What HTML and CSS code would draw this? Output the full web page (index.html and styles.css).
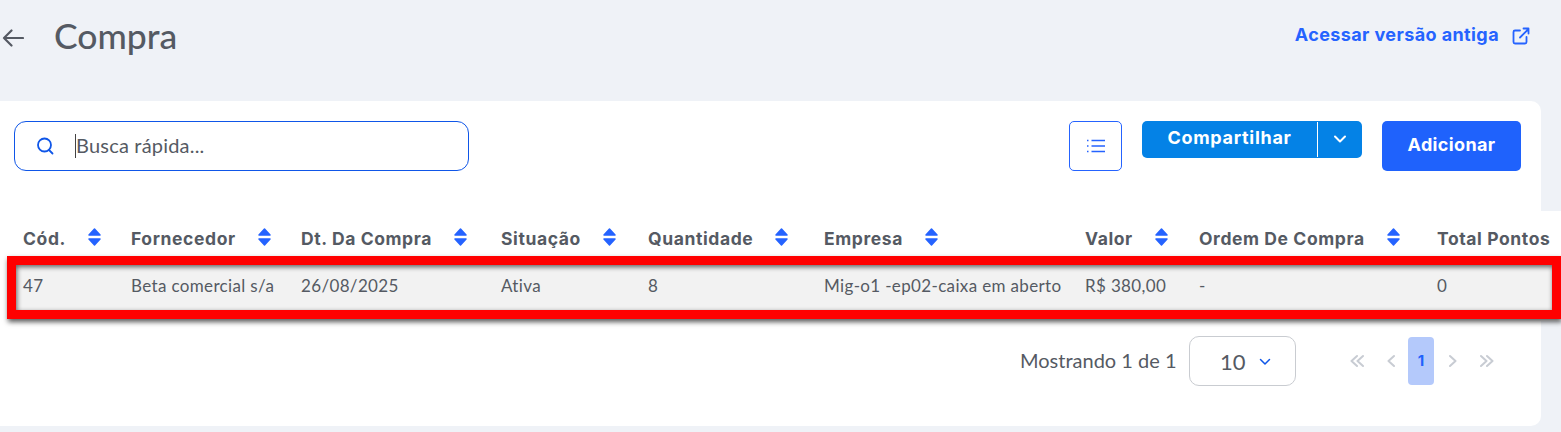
FILE: index.html
```html
<!DOCTYPE html>
<html lang="pt">
<head>
<meta charset="utf-8">
<title>Compra</title>
<link rel="stylesheet" href="styles.css">
</head>
<body>
<svg class="defs" width="0" height="0" aria-hidden="true">
  <symbol id="sort" viewBox="0 0 13 18"><path fill="#2563ff" stroke="#2563ff" stroke-linejoin="round" stroke-width="1.500" d="M6.500 1 12 7H1ZM1 11h11l-5.500 6Z"/></symbol>
  <symbol id="dbl-l" viewBox="0 0 14 14"><path fill="none" stroke="#c8ccd3" stroke-width="2" stroke-linecap="round" stroke-linejoin="round" d="M7 2 1.500 7 7 12M13 2 7.500 7l5.500 5"/></symbol>
  <symbol id="dbl-r" viewBox="0 0 14 14"><path fill="none" stroke="#c8ccd3" stroke-width="2" stroke-linecap="round" stroke-linejoin="round" d="m1 2 5.500 5L1 12M7 2l5.500 5L7 12"/></symbol>
  <symbol id="sgl-l" viewBox="0 0 8 14"><path fill="none" stroke="#c8ccd3" stroke-width="2" stroke-linecap="round" stroke-linejoin="round" d="M7 2 1.500 7 7 12"/></symbol>
  <symbol id="sgl-r" viewBox="0 0 8 14"><path fill="none" stroke="#c8ccd3" stroke-width="2" stroke-linecap="round" stroke-linejoin="round" d="m1 2 5.500 5L1 12"/></symbol>
</svg>
<header class="topbar">
  <div class="title-group">
    <svg class="back" width="22" height="22" viewBox="0 0 22 22" fill="none" stroke="#555a63" stroke-width="2.200" stroke-linecap="round" stroke-linejoin="round"><path d="M2 11h19M9.500 3.500 2 11l7.500 7.500"/></svg>
    <h1>Compra</h1>
  </div>
  <a class="legacy">Acessar versão antiga
    <svg width="18" height="18" viewBox="0 0 18 18" fill="none" stroke="#2563ff" stroke-width="1.800" stroke-linecap="round" stroke-linejoin="round"><path d="M8 3.500H3a1.500 1.500 0 0 0-1.500 1.500v10A1.500 1.500 0 0 0 3 16.500h10a1.500 1.500 0 0 0 1.500-1.500v-5M8 10.500 16.500 2M11.500 1.500h5v5"/></svg>
  </a>
</header>
<main class="card">
  <div class="toolbar">
    <div class="search">
      <svg width="18" height="18" viewBox="0 0 18 18" fill="none" stroke="#0f56e8" stroke-width="1.800" stroke-linecap="round"><circle cx="8.500" cy="8" r="6.500"/><path d="m13 13 3.500 3.500"/></svg>
      <span class="caret"></span><span class="placeholder">Busca rápida...</span>
    </div>
    <div class="actions">
      <button class="list-btn" aria-label="Lista">
        <svg width="18" height="14" viewBox="0 0 18 14" fill="none" stroke="#2563ff" stroke-width="1.300"><path d="M0 1.500h2M0 7h2M0 12.500h2" stroke-dasharray="1.500 0.500"/><path d="M4.500 1.500H18M4.500 7H18M4.500 12.500H18"/></svg>
      </button>
      <div class="split">
        <span class="split-label">Compartilhar</span>
        <span class="split-arrow"><svg width="14" height="9" viewBox="0 0 14 9" fill="none" stroke="#fff" stroke-width="2" stroke-linecap="round" stroke-linejoin="round"><path d="m2 1.500 5 5 5-5"/></svg></span>
      </div>
      <button class="primary">Adicionar</button>
    </div>
  </div>
  <div class="table-wrap">
    <table>
      <colgroup>
        <col class="c1"><col class="c2"><col class="c3"><col class="c4"><col class="c5"><col class="c6"><col class="c7"><col class="c8"><col class="c9">
      </colgroup>
      <thead>
        <tr>
          <th><span class="th"><span class="lbl">Cód.</span><svg class="sort"><use href="#sort"/></svg></span></th>
          <th><span class="th"><span class="lbl">Fornecedor</span><svg class="sort"><use href="#sort"/></svg></span></th>
          <th><span class="th"><span class="lbl">Dt. Da Compra</span><svg class="sort"><use href="#sort"/></svg></span></th>
          <th><span class="th"><span class="lbl">Situação</span><svg class="sort"><use href="#sort"/></svg></span></th>
          <th><span class="th"><span class="lbl">Quantidade</span><svg class="sort"><use href="#sort"/></svg></span></th>
          <th><span class="th"><span class="lbl">Empresa</span><svg class="sort"><use href="#sort"/></svg></span></th>
          <th><span class="th"><span class="lbl">Valor</span><svg class="sort"><use href="#sort"/></svg></span></th>
          <th><span class="th"><span class="lbl">Ordem De Compra</span><svg class="sort"><use href="#sort"/></svg></span></th>
          <th><span class="th"><span class="lbl">Total Pontos</span></span></th>
        </tr>
      </thead>
      <tbody>
        <tr>
          <td>47</td><td>Beta comercial s/a</td><td>26/08/2025</td><td>Ativa</td><td>8</td><td>Mig-o1 -ep02-caixa em aberto</td><td>R$ 380,00</td><td>-</td><td>0</td>
        </tr>
      </tbody>
    </table>
    <div class="highlight"></div>
  </div>
  <div class="pager">
    <span class="count">Mostrando 1 de 1</span>
    <div class="size">10 <svg width="12" height="8" viewBox="0 0 12 8" fill="none" stroke="#0f56e8" stroke-width="1.500" stroke-linecap="round" stroke-linejoin="round"><path d="m1.500 1.500 4.500 4.500 4.500-4.500"/></svg></div>
    <nav class="pages">
      <svg class="dbl"><use href="#dbl-l"/></svg>
      <svg class="sgl gap-a"><use href="#sgl-l"/></svg>
      <span class="active">1</span>
      <svg class="sgl gap-c"><use href="#sgl-r"/></svg>
      <svg class="dbl gap-d"><use href="#dbl-r"/></svg>
    </nav>
  </div>
</main>
</body>
</html>
```
FILE: styles.css
```css
* { box-sizing: border-box; }
html, body { margin: 0; height: 100%; overflow: hidden; }
body { background: #eff2f7; font-family: "Lato", "Noto Sans", sans-serif; color: #555a63; }
.defs { position: absolute; }
.topbar { height: 101px; display: flex; justify-content: space-between; align-items: flex-start; padding-right: 31px; }
.title-group { display: flex; align-items: center; gap: 30px; padding-top: 14px; padding-left: 2px; }
.back { display: block; margin-top: 4px; }
h1 { margin: 0; font-size: 35.500px; line-height: 44px; font-weight: 500; color: #555a63; font-family: "Lato", sans-serif; }
.legacy { display: flex; align-items: center; gap: 13px; margin-top: 24px; height: 22px; color: #2563ff; font: 700 18px/22px "Inter", sans-serif; letter-spacing: .4px; }
.legacy svg { margin-top: 2px; }
.card { position: relative; width: 1541px; height: 325px; background: #fff; border-radius: 0 10px 10px 0; }
.toolbar { height: 110px; display: flex; justify-content: space-between; align-items: flex-start; padding: 20px 20px 0 14px; }
.search { width: 455px; height: 50px; display: flex; align-items: center; padding-left: 21px; border: 1px solid #0f56e8; border-radius: 12px; background: #fff; }
.caret { width: 1px; height: 24px; background: #444; margin-left: 21px; }
.placeholder { font-size: 20px; letter-spacing: .2px; line-height: 24px; margin-top: -2px; color: #555a63; }
.actions { display: flex; align-items: flex-start; }
.list-btn { width: 53px; height: 50px; padding: 0; display: flex; align-items: center; justify-content: center; background: #fff; border: 1px solid #2563ff; border-radius: 5px; margin-right: 20px; }
.split { width: 220px; height: 37px; display: flex; background: #0482e6; border-radius: 5px; color: #fff; margin-right: 20px; }
.split-label { flex: 1; text-align: center; font: 700 18px/34px "Inter", sans-serif; letter-spacing: .7px; }
.split-arrow { width: 45px; height: 35px; margin-top: 1px; display: flex; align-items: center; justify-content: center; border-left: 1px solid #fff; }
.primary { width: 139px; height: 50px; padding: 0 0 2px; border: 0; background: #1f62fc; color: #fff; border-radius: 5px; font: 700 18px/48px "Inter", sans-serif; letter-spacing: .35px; }
.table-wrap { position: relative; width: 1561px; height: 110px; background: #fff; padding-left: 14px; }
table { border-collapse: collapse; table-layout: fixed; width: 1547px; }
.c1 { width: 108px; } .c2 { width: 170px; } .c3 { width: 200px; } .c4 { width: 147px; } .c5 { width: 176px; } .c6 { width: 261px; } .c7 { width: 114px; } .c8 { width: 238px; } .c9 { width: 133px; }
th { height: 54px; padding: 0 0 0 9px; text-align: left; vertical-align: middle; }
.th { display: flex; align-items: center; }
.lbl { font: 700 17.500px/20px "Inter", sans-serif; letter-spacing: .6px; margin-top: 2px; color: #555a63; white-space: nowrap; }
td { height: 45px; padding: 0 0 4px 9px; background: #f2f2f2; font-size: 17px; letter-spacing: .35px; white-space: nowrap; color: #555a63; }
.sort { width: 13px; height: 18px; margin-left: 22px; margin-bottom: 2px; flex: none; }
.highlight { position: absolute; left: 7px; top: 45px; width: 1554px; height: 63px; border: 9px solid #ff0000; box-shadow: 1px 3px 5px rgba(0,0,0,.65), inset 1px 2px 5px rgba(0,0,0,.6); pointer-events: none; }
.pager { display: flex; align-items: center; padding-left: 1020px; height: 50px; margin-top: 15px; }
.count { font-size: 20px; font-weight: 400; color: #555a63; width: 169px; margin-top: -2px; }
.size { width: 107px; height: 50px; display: flex; align-items: center; gap: 13px; padding-left: 30px; border: 1px solid #c9ccd1; border-radius: 10px; font-size: 22px; color: #555a63; }
.size svg { margin-top: 2px; }
.pages { display: flex; align-items: center; margin-left: 54px; height: 48px; }
.dbl { width: 14px; height: 14px; }
.sgl { width: 8px; height: 14px; }
.gap-a { margin-left: 23px; }
.active { width: 26px; height: 48px; margin: 0 15px 0 13px; background: #b4c9fb; color: #1f62fc; font: 700 15px/48px "Inter", sans-serif; text-align: center; border-radius: 4px; }
.gap-d { margin-left: 23px; }
```
